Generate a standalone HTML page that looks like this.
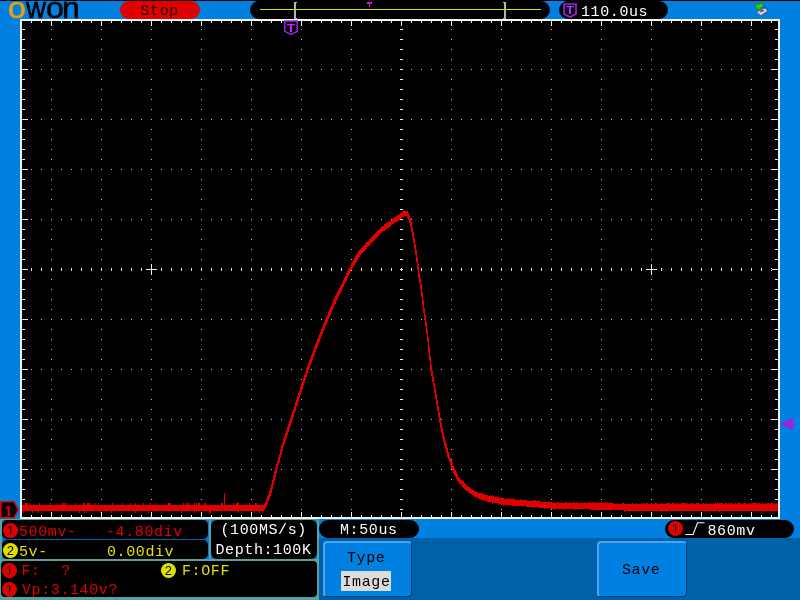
<!DOCTYPE html>
<html><head><meta charset="utf-8"><title>OWON</title>
<style>
html,body{margin:0;padding:0;}
body{width:800px;height:600px;overflow:hidden;background:#0080e0;position:relative;font-family:"Liberation Mono",monospace;font-size:15px;letter-spacing:0.6px;line-height:18px;}
.a{position:absolute;}
.t{position:absolute;white-space:pre;height:18px;line-height:18px;}
.pill{position:absolute;background:#000;border-radius:9px;}
.bk{position:absolute;background:#000;}
.c{position:absolute;border-radius:50%;width:15.5px;height:15.5px;color:#000;font-family:"Liberation Sans",sans-serif;font-size:13px;line-height:15.5px;text-align:center;letter-spacing:0;}
.lg{position:absolute;top:-10px;font-family:"Liberation Sans",sans-serif;font-size:29px;line-height:36px;color:#000;transform-origin:0 0;-webkit-text-stroke:0.6px;}
.ls{display:inline-block;transform-origin:0 0;}
.c.one::before{content:"";position:absolute;left:4.5px;top:11.5px;width:3px;height:1px;background:inherit}
.c.one::after{content:"";position:absolute;left:8.5px;top:11.5px;width:2.5px;height:1px;background:inherit}
.red{color:#e00000;} .yel{color:#e0e000;} .wh{color:#fff;}
.btn{position:absolute;background:#0080e0;border-radius:4px;box-sizing:border-box;border-top:2px solid #4ca4ee;border-left:2px solid #4ca4ee;border-right:1.5px solid #003c74;border-bottom:1.5px solid #003c74;}
</style></head><body><div id="w" style="position:absolute;left:0;top:0;width:800px;height:600px;overflow:hidden;will-change:transform">
<div class="a" style="left:0;top:0;width:800px;height:1px;background:#000"></div>

<!-- logo -->
<div class="lg" style="left:0;white-space:nowrap;letter-spacing:0"><span class="ls" style="margin-left:7.9px;transform:scaleX(1.107);color:#e8a010">o</span><span class="ls" style="margin-left:2.37px;transform:scaleX(0.95)">w</span><span class="ls" style="margin-left:-1.24px;transform:scaleX(1.11)">o</span><span class="ls" style="margin-left:-0.03px;transform:scaleX(1.1)">n</span></div>

<!-- Stop -->
<div class="a" style="left:120px;top:1px;width:80px;height:18px;border-radius:9px;background:#e00000"></div>
<div class="t" style="left:140.5px;top:3px;color:#1a0000">Stop</div>

<!-- position bar -->
<div class="pill" style="left:250px;top:1px;width:300px;height:18px"></div>
<div class="a" style="left:260px;top:9px;width:281px;height:1px;background:#e0e000"></div>
<div class="a" style="left:294px;top:2px;width:2px;height:17px;background:#b4b4b4"></div>
<div class="a" style="left:296px;top:2px;width:1px;height:1px;background:#b4b4b4"></div>
<div class="a" style="left:296px;top:18px;width:1px;height:1px;background:#b4b4b4"></div>
<div class="a" style="left:504px;top:2px;width:2px;height:17px;background:#b4b4b4"></div>
<div class="a" style="left:503px;top:2px;width:1px;height:1px;background:#b4b4b4"></div>
<div class="a" style="left:503px;top:18px;width:1px;height:1px;background:#b4b4b4"></div>
<div class="a" style="left:367px;top:2px;width:5px;height:2px;background:#f000f0"></div>
<div class="a" style="left:369px;top:4px;width:1px;height:3px;background:#f000f0"></div>

<!-- time pill -->
<div class="pill" style="left:559px;top:1px;width:109px;height:18px"></div>
<svg class="a" style="left:563px;top:3px" width="14" height="15" viewBox="0 0 14 15"><path d="M1 1H13V11L7 14L1 11Z" fill="#000" stroke="#a020f0" stroke-width="1.6"/></svg>
<div class="a" style="left:563px;top:4px;width:14px;height:12px;color:#c828ff;font-family:'Liberation Sans',sans-serif;font-weight:bold;font-size:11px;line-height:12px;text-align:center;letter-spacing:0;transform:scaleX(1.2)">T</div>
<div class="t wh" style="left:581px;top:4px">110.0us</div>

<!-- usb icon -->
<svg class="a" style="left:752px;top:0px" width="20" height="20" viewBox="0 0 20 20">
<path d="M12 5L15.5 8.5L16.6 11.8L10 16.6L8.5 15Z" fill="#0058c8" opacity="0.7"/>
<path d="M6 11.2L13.2 8L15.7 11.2L8.8 16L5.7 13.4Z" fill="#d0d0e0" stroke="#707090" stroke-width="0.7"/>
<path d="M6.2 13.6L8.9 15.7L15.3 11.4" fill="none" stroke="#505070" stroke-width="0.9"/>
<path d="M8.4 11.6L11.6 10.1" stroke="#383868" stroke-width="1.6"/>
<path d="M4.2 2.4L6 4.6L8.6 3L10.6 3.2L11.3 5L10.8 6.8L8.4 8L8.2 10.9L5.6 9.6L3.4 7.4L3.6 4.8Z" fill="#2cb414" stroke="#1c8c10" stroke-width="0.7" stroke-linejoin="round"/>
<path d="M4.8 5.2L7 6.2L9.2 4.4L9.8 5.6L7.4 7.2L5.2 6.8Z" fill="#6cd828"/>
</svg>

<!-- plot -->
<div class="a" style="left:20px;top:19px;width:760px;height:500px;background:#f8f4f0"></div>
<div class="a" style="left:22px;top:21px;width:756px;height:496px;background:#000"></div>
<svg class="a" style="left:0;top:0" width="800" height="600" viewBox="0 0 800 600" shape-rendering="crispEdges">
<g stroke="#c4c4c4" stroke-width="1" fill="none"><line x1="51.5" y1="29" x2="51.5" y2="512" stroke-dasharray="1 9"/><line x1="101.5" y1="29" x2="101.5" y2="512" stroke-dasharray="1 9"/><line x1="151.5" y1="29" x2="151.5" y2="512" stroke-dasharray="1 9"/><line x1="201.5" y1="29" x2="201.5" y2="512" stroke-dasharray="1 9"/><line x1="251.5" y1="29" x2="251.5" y2="512" stroke-dasharray="1 9"/><line x1="301.5" y1="29" x2="301.5" y2="512" stroke-dasharray="1 9"/><line x1="351.5" y1="29" x2="351.5" y2="512" stroke-dasharray="1 9"/><line x1="451.5" y1="29" x2="451.5" y2="512" stroke-dasharray="1 9"/><line x1="501.5" y1="29" x2="501.5" y2="512" stroke-dasharray="1 9"/><line x1="551.5" y1="29" x2="551.5" y2="512" stroke-dasharray="1 9"/><line x1="601.5" y1="29" x2="601.5" y2="512" stroke-dasharray="1 9"/><line x1="651.5" y1="29" x2="651.5" y2="512" stroke-dasharray="1 9"/><line x1="701.5" y1="29" x2="701.5" y2="512" stroke-dasharray="1 9"/><line x1="751.5" y1="29" x2="751.5" y2="512" stroke-dasharray="1 9"/><line x1="31" y1="69.5" x2="774" y2="69.5" stroke-dasharray="1 9"/><line x1="31" y1="119.5" x2="774" y2="119.5" stroke-dasharray="1 9"/><line x1="31" y1="169.5" x2="774" y2="169.5" stroke-dasharray="1 9"/><line x1="31" y1="219.5" x2="774" y2="219.5" stroke-dasharray="1 9"/><line x1="31" y1="319.5" x2="774" y2="319.5" stroke-dasharray="1 9"/><line x1="31" y1="369.5" x2="774" y2="369.5" stroke-dasharray="1 9"/><line x1="31" y1="419.5" x2="774" y2="419.5" stroke-dasharray="1 9"/><line x1="31" y1="469.5" x2="774" y2="469.5" stroke-dasharray="1 9"/></g>
<path d="M31 21v2h1v-2zM31 515v2h1v-2zM41 21v2h1v-2zM41 515v2h1v-2zM51 21v5h1v-5zM51 512v5h1v-5zM61 21v2h1v-2zM61 515v2h1v-2zM71 21v2h1v-2zM71 515v2h1v-2zM81 21v2h1v-2zM81 515v2h1v-2zM91 21v2h1v-2zM91 515v2h1v-2zM101 21v5h1v-5zM101 512v5h1v-5zM111 21v2h1v-2zM111 515v2h1v-2zM121 21v2h1v-2zM121 515v2h1v-2zM131 21v2h1v-2zM131 515v2h1v-2zM141 21v2h1v-2zM141 515v2h1v-2zM151 21v5h1v-5zM151 512v5h1v-5zM161 21v2h1v-2zM161 515v2h1v-2zM171 21v2h1v-2zM171 515v2h1v-2zM181 21v2h1v-2zM181 515v2h1v-2zM191 21v2h1v-2zM191 515v2h1v-2zM201 21v5h1v-5zM201 512v5h1v-5zM211 21v2h1v-2zM211 515v2h1v-2zM221 21v2h1v-2zM221 515v2h1v-2zM231 21v2h1v-2zM231 515v2h1v-2zM241 21v2h1v-2zM241 515v2h1v-2zM251 21v5h1v-5zM251 512v5h1v-5zM261 21v2h1v-2zM261 515v2h1v-2zM271 21v2h1v-2zM271 515v2h1v-2zM281 21v2h1v-2zM281 515v2h1v-2zM291 21v2h1v-2zM291 515v2h1v-2zM301 21v5h1v-5zM301 512v5h1v-5zM311 21v2h1v-2zM311 515v2h1v-2zM321 21v2h1v-2zM321 515v2h1v-2zM331 21v2h1v-2zM331 515v2h1v-2zM341 21v2h1v-2zM341 515v2h1v-2zM351 21v5h1v-5zM351 512v5h1v-5zM361 21v2h1v-2zM361 515v2h1v-2zM371 21v2h1v-2zM371 515v2h1v-2zM381 21v2h1v-2zM381 515v2h1v-2zM391 21v2h1v-2zM391 515v2h1v-2zM401 21v5h1v-5zM401 512v5h1v-5zM411 21v2h1v-2zM411 515v2h1v-2zM421 21v2h1v-2zM421 515v2h1v-2zM431 21v2h1v-2zM431 515v2h1v-2zM441 21v2h1v-2zM441 515v2h1v-2zM451 21v5h1v-5zM451 512v5h1v-5zM461 21v2h1v-2zM461 515v2h1v-2zM471 21v2h1v-2zM471 515v2h1v-2zM481 21v2h1v-2zM481 515v2h1v-2zM491 21v2h1v-2zM491 515v2h1v-2zM501 21v5h1v-5zM501 512v5h1v-5zM511 21v2h1v-2zM511 515v2h1v-2zM521 21v2h1v-2zM521 515v2h1v-2zM531 21v2h1v-2zM531 515v2h1v-2zM541 21v2h1v-2zM541 515v2h1v-2zM551 21v5h1v-5zM551 512v5h1v-5zM561 21v2h1v-2zM561 515v2h1v-2zM571 21v2h1v-2zM571 515v2h1v-2zM581 21v2h1v-2zM581 515v2h1v-2zM591 21v2h1v-2zM591 515v2h1v-2zM601 21v5h1v-5zM601 512v5h1v-5zM611 21v2h1v-2zM611 515v2h1v-2zM621 21v2h1v-2zM621 515v2h1v-2zM631 21v2h1v-2zM631 515v2h1v-2zM641 21v2h1v-2zM641 515v2h1v-2zM651 21v5h1v-5zM651 512v5h1v-5zM661 21v2h1v-2zM661 515v2h1v-2zM671 21v2h1v-2zM671 515v2h1v-2zM681 21v2h1v-2zM681 515v2h1v-2zM691 21v2h1v-2zM691 515v2h1v-2zM701 21v5h1v-5zM701 512v5h1v-5zM711 21v2h1v-2zM711 515v2h1v-2zM721 21v2h1v-2zM721 515v2h1v-2zM731 21v2h1v-2zM731 515v2h1v-2zM741 21v2h1v-2zM741 515v2h1v-2zM751 21v5h1v-5zM751 512v5h1v-5zM761 21v2h1v-2zM761 515v2h1v-2zM771 21v2h1v-2zM771 515v2h1v-2zM22 29h3v1h-3zM775 29h3v1h-3zM22 39h3v1h-3zM775 39h3v1h-3zM22 49h3v1h-3zM775 49h3v1h-3zM22 59h3v1h-3zM775 59h3v1h-3zM22 69h6v1h-6zM771 69h7v1h-7zM22 79h3v1h-3zM775 79h3v1h-3zM22 89h3v1h-3zM775 89h3v1h-3zM22 99h3v1h-3zM775 99h3v1h-3zM22 109h3v1h-3zM775 109h3v1h-3zM22 119h6v1h-6zM771 119h7v1h-7zM22 129h3v1h-3zM775 129h3v1h-3zM22 139h3v1h-3zM775 139h3v1h-3zM22 149h3v1h-3zM775 149h3v1h-3zM22 159h3v1h-3zM775 159h3v1h-3zM22 169h6v1h-6zM771 169h7v1h-7zM22 179h3v1h-3zM775 179h3v1h-3zM22 189h3v1h-3zM775 189h3v1h-3zM22 199h3v1h-3zM775 199h3v1h-3zM22 209h3v1h-3zM775 209h3v1h-3zM22 219h6v1h-6zM771 219h7v1h-7zM22 229h3v1h-3zM775 229h3v1h-3zM22 239h3v1h-3zM775 239h3v1h-3zM22 249h3v1h-3zM775 249h3v1h-3zM22 259h3v1h-3zM775 259h3v1h-3zM22 269h6v1h-6zM771 269h7v1h-7zM22 279h3v1h-3zM775 279h3v1h-3zM22 289h3v1h-3zM775 289h3v1h-3zM22 299h3v1h-3zM775 299h3v1h-3zM22 309h3v1h-3zM775 309h3v1h-3zM22 319h6v1h-6zM771 319h7v1h-7zM22 329h3v1h-3zM775 329h3v1h-3zM22 339h3v1h-3zM775 339h3v1h-3zM22 349h3v1h-3zM775 349h3v1h-3zM22 359h3v1h-3zM775 359h3v1h-3zM22 369h6v1h-6zM771 369h7v1h-7zM22 379h3v1h-3zM775 379h3v1h-3zM22 389h3v1h-3zM775 389h3v1h-3zM22 399h3v1h-3zM775 399h3v1h-3zM22 409h3v1h-3zM775 409h3v1h-3zM22 419h6v1h-6zM771 419h7v1h-7zM22 429h3v1h-3zM775 429h3v1h-3zM22 439h3v1h-3zM775 439h3v1h-3zM22 449h3v1h-3zM775 449h3v1h-3zM22 459h3v1h-3zM775 459h3v1h-3zM22 469h6v1h-6zM771 469h7v1h-7zM22 479h3v1h-3zM775 479h3v1h-3zM22 489h3v1h-3zM775 489h3v1h-3zM22 499h3v1h-3zM775 499h3v1h-3zM22 509h3v1h-3zM775 509h3v1h-3zM31 268v3h1v-3zM41 268v3h1v-3zM51 268v3h1v-3zM61 268v3h1v-3zM71 268v3h1v-3zM81 268v3h1v-3zM91 268v3h1v-3zM101 268v3h1v-3zM111 268v3h1v-3zM121 268v3h1v-3zM131 268v3h1v-3zM141 268v3h1v-3zM161 268v3h1v-3zM171 268v3h1v-3zM181 268v3h1v-3zM191 268v3h1v-3zM201 268v3h1v-3zM211 268v3h1v-3zM221 268v3h1v-3zM231 268v3h1v-3zM241 268v3h1v-3zM251 268v3h1v-3zM261 268v3h1v-3zM271 268v3h1v-3zM281 268v3h1v-3zM291 268v3h1v-3zM301 268v3h1v-3zM311 268v3h1v-3zM321 268v3h1v-3zM331 268v3h1v-3zM341 268v3h1v-3zM351 268v3h1v-3zM361 268v3h1v-3zM371 268v3h1v-3zM381 268v3h1v-3zM391 268v3h1v-3zM411 268v3h1v-3zM421 268v3h1v-3zM431 268v3h1v-3zM441 268v3h1v-3zM451 268v3h1v-3zM461 268v3h1v-3zM471 268v3h1v-3zM481 268v3h1v-3zM491 268v3h1v-3zM501 268v3h1v-3zM511 268v3h1v-3zM521 268v3h1v-3zM531 268v3h1v-3zM541 268v3h1v-3zM551 268v3h1v-3zM561 268v3h1v-3zM571 268v3h1v-3zM581 268v3h1v-3zM591 268v3h1v-3zM601 268v3h1v-3zM611 268v3h1v-3zM621 268v3h1v-3zM631 268v3h1v-3zM641 268v3h1v-3zM661 268v3h1v-3zM671 268v3h1v-3zM681 268v3h1v-3zM691 268v3h1v-3zM701 268v3h1v-3zM711 268v3h1v-3zM721 268v3h1v-3zM731 268v3h1v-3zM741 268v3h1v-3zM751 268v3h1v-3zM761 268v3h1v-3zM771 268v3h1v-3zM400 29h3v1h-3zM400 39h3v1h-3zM400 49h3v1h-3zM400 59h3v1h-3zM400 69h3v1h-3zM400 79h3v1h-3zM400 89h3v1h-3zM400 99h3v1h-3zM400 109h3v1h-3zM400 119h3v1h-3zM400 129h3v1h-3zM400 139h3v1h-3zM400 149h3v1h-3zM400 159h3v1h-3zM400 169h3v1h-3zM400 179h3v1h-3zM400 189h3v1h-3zM400 199h3v1h-3zM400 209h3v1h-3zM400 219h3v1h-3zM400 229h3v1h-3zM400 239h3v1h-3zM400 249h3v1h-3zM400 259h3v1h-3zM400 279h3v1h-3zM400 289h3v1h-3zM400 299h3v1h-3zM400 309h3v1h-3zM400 319h3v1h-3zM400 329h3v1h-3zM400 339h3v1h-3zM400 349h3v1h-3zM400 359h3v1h-3zM400 369h3v1h-3zM400 379h3v1h-3zM400 389h3v1h-3zM400 399h3v1h-3zM400 409h3v1h-3zM400 419h3v1h-3zM400 429h3v1h-3zM400 439h3v1h-3zM400 449h3v1h-3zM400 459h3v1h-3zM400 469h3v1h-3zM400 479h3v1h-3zM400 489h3v1h-3zM400 499h3v1h-3zM400 509h3v1h-3zM400 269h3v1h-3zM401 268h1v3h-1zM146 269h11v1h-11zM151 264h1v11h-1zM646 269h11v1h-11zM651 264h1v11h-1z" fill="#f0f0f0"/>
<path d="M22 505v6h1v-6zM23 505v8h1v-8zM24 505v6h1v-6zM25 503v8h1v-8zM26 503v8h1v-8zM27 503v8h1v-8zM28 505v6h1v-6zM29 503v8h1v-8zM30 505v6h1v-6zM31 505v6h1v-6zM32 505v8h1v-8zM33 505v6h1v-6zM34 505v6h1v-6zM35 505v6h1v-6zM36 505v6h1v-6zM37 505v6h1v-6zM38 505v8h1v-8zM39 503v8h1v-8zM40 505v6h1v-6zM41 505v6h1v-6zM42 505v6h1v-6zM43 505v6h1v-6zM44 505v6h1v-6zM45 505v6h1v-6zM46 505v6h1v-6zM47 505v6h1v-6zM48 505v6h1v-6zM49 505v6h1v-6zM50 503v8h1v-8zM51 505v6h1v-6zM52 505v6h1v-6zM53 505v6h1v-6zM54 505v6h1v-6zM55 505v6h1v-6zM56 505v6h1v-6zM57 503v8h1v-8zM58 505v6h1v-6zM59 505v6h1v-6zM60 505v6h1v-6zM61 503v8h1v-8zM62 505v6h1v-6zM63 503v8h1v-8zM64 503v8h1v-8zM65 505v6h1v-6zM66 503v8h1v-8zM67 505v6h1v-6zM68 505v6h1v-6zM69 505v6h1v-6zM70 505v6h1v-6zM71 505v6h1v-6zM72 505v6h1v-6zM73 505v6h1v-6zM74 505v6h1v-6zM75 503v8h1v-8zM76 505v6h1v-6zM77 505v6h1v-6zM78 505v6h1v-6zM79 505v8h1v-8zM80 505v6h1v-6zM81 505v6h1v-6zM82 505v6h1v-6zM83 503v8h1v-8zM84 503v10h1v-10zM85 505v6h1v-6zM86 505v8h1v-8zM87 503v8h1v-8zM88 503v8h1v-8zM89 503v8h1v-8zM90 505v6h1v-6zM91 505v6h1v-6zM92 505v6h1v-6zM93 505v6h1v-6zM94 505v6h1v-6zM95 503v8h1v-8zM96 505v6h1v-6zM97 505v6h1v-6zM98 503v8h1v-8zM99 505v6h1v-6zM100 505v8h1v-8zM101 505v6h1v-6zM102 505v6h1v-6zM103 505v6h1v-6zM104 505v6h1v-6zM105 505v6h1v-6zM106 505v6h1v-6zM107 505v6h1v-6zM108 505v6h1v-6zM109 505v6h1v-6zM110 505v6h1v-6zM111 505v8h1v-8zM112 503v8h1v-8zM113 505v6h1v-6zM114 505v6h1v-6zM115 505v6h1v-6zM116 505v6h1v-6zM117 505v6h1v-6zM118 505v6h1v-6zM119 505v6h1v-6zM120 505v6h1v-6zM121 505v6h1v-6zM122 503v8h1v-8zM123 505v6h1v-6zM124 505v6h1v-6zM125 505v6h1v-6zM126 505v6h1v-6zM127 505v6h1v-6zM128 505v6h1v-6zM129 505v6h1v-6zM130 503v8h1v-8zM131 505v6h1v-6zM132 505v6h1v-6zM133 505v6h1v-6zM134 505v6h1v-6zM135 503v10h1v-10zM136 505v6h1v-6zM137 505v6h1v-6zM138 505v6h1v-6zM139 505v6h1v-6zM140 505v6h1v-6zM141 505v6h1v-6zM142 505v6h1v-6zM143 503v8h1v-8zM144 505v6h1v-6zM145 505v6h1v-6zM146 505v6h1v-6zM147 505v6h1v-6zM148 505v8h1v-8zM149 505v6h1v-6zM150 503v8h1v-8zM151 505v6h1v-6zM152 505v6h1v-6zM153 505v6h1v-6zM154 505v6h1v-6zM155 503v8h1v-8zM156 505v6h1v-6zM157 505v6h1v-6zM158 505v6h1v-6zM159 505v6h1v-6zM160 505v6h1v-6zM161 505v6h1v-6zM162 505v6h1v-6zM163 505v6h1v-6zM164 505v6h1v-6zM165 505v6h1v-6zM166 505v6h1v-6zM167 505v6h1v-6zM168 503v8h1v-8zM169 503v8h1v-8zM170 503v8h1v-8zM171 505v6h1v-6zM172 505v6h1v-6zM173 505v6h1v-6zM174 505v6h1v-6zM175 505v6h1v-6zM176 505v6h1v-6zM177 505v6h1v-6zM178 505v6h1v-6zM179 505v6h1v-6zM180 505v6h1v-6zM181 505v8h1v-8zM182 505v6h1v-6zM183 503v8h1v-8zM184 505v6h1v-6zM185 503v8h1v-8zM186 505v6h1v-6zM187 503v8h1v-8zM188 503v8h1v-8zM189 505v6h1v-6zM190 505v6h1v-6zM191 505v6h1v-6zM192 505v6h1v-6zM193 505v6h1v-6zM194 503v10h1v-10zM195 505v6h1v-6zM196 503v8h1v-8zM197 505v6h1v-6zM198 503v8h1v-8zM199 503v8h1v-8zM200 505v6h1v-6zM201 505v6h1v-6zM202 505v6h1v-6zM203 505v6h1v-6zM204 503v8h1v-8zM205 503v8h1v-8zM206 505v6h1v-6zM207 505v6h1v-6zM208 505v6h1v-6zM209 505v8h1v-8zM210 505v8h1v-8zM211 505v6h1v-6zM212 505v6h1v-6zM213 505v6h1v-6zM214 505v6h1v-6zM215 505v6h1v-6zM216 505v6h1v-6zM217 505v6h1v-6zM218 505v6h1v-6zM219 505v6h1v-6zM220 505v6h1v-6zM221 503v8h1v-8zM222 503v8h1v-8zM223 505v6h1v-6zM224 493v18h1v-18zM225 505v6h1v-6zM226 505v6h1v-6zM227 505v6h1v-6zM228 505v6h1v-6zM229 505v6h1v-6zM230 505v6h1v-6zM231 505v6h1v-6zM232 505v6h1v-6zM233 503v8h1v-8zM234 505v6h1v-6zM235 505v6h1v-6zM236 503v8h1v-8zM237 503v8h1v-8zM238 503v10h1v-10zM239 505v6h1v-6zM240 505v6h1v-6zM241 505v6h1v-6zM242 505v6h1v-6zM243 505v6h1v-6zM244 505v6h1v-6zM245 505v6h1v-6zM246 503v8h1v-8zM247 505v6h1v-6zM248 505v6h1v-6zM249 503v8h1v-8zM250 505v6h1v-6zM251 505v6h1v-6zM252 505v6h1v-6zM253 505v6h1v-6zM254 505v8h1v-8zM255 503v8h1v-8zM256 503v8h1v-8zM257 505v6h1v-6zM258 505v6h1v-6zM259 505v8h1v-8zM260 505v6h1v-6zM261 505v6h1v-6zM262 505v8h1v-8zM263 505v6h1v-6zM264 504v6h1v-6zM265 502v6h1v-6zM266 499v8h1v-8zM267 496v8h1v-8zM268 494v7h1v-7zM269 491v8h1v-8zM270 488v8h1v-8zM271 484v9h1v-9zM272 480v9h1v-9zM273 476v9h1v-9zM274 471v10h1v-10zM275 468v9h1v-9zM276 464v9h1v-9zM277 461v8h1v-8zM278 457v8h1v-8zM279 454v8h1v-8zM280 450v8h1v-8zM281 446v9h1v-9zM282 443v8h1v-8zM283 439v8h1v-8zM284 437v7h1v-7zM285 433v8h1v-8zM286 430v8h1v-8zM287 427v8h1v-8zM288 424v8h1v-8zM289 421v8h1v-8zM290 418v8h1v-8zM291 415v8h1v-8zM292 412v8h1v-8zM293 409v8h1v-8zM294 406v7h1v-7zM295 402v9h1v-9zM296 400v7h1v-7zM297 396v9h1v-9zM298 393v9h1v-9zM299 391v7h1v-7zM300 387v8h1v-8zM301 384v8h1v-8zM302 381v8h1v-8zM303 378v8h1v-8zM304 375v8h1v-8zM305 372v8h1v-8zM306 368v9h1v-9zM307 366v7h1v-7zM308 363v7h1v-7zM309 360v8h1v-8zM310 358v7h1v-7zM311 355v8h1v-8zM312 353v7h1v-7zM313 350v7h1v-7zM314 347v8h1v-8zM315 344v8h1v-8zM316 342v7h1v-7zM317 339v8h1v-8zM318 337v7h1v-7zM319 334v8h1v-8zM320 332v7h1v-7zM321 329v7h1v-7zM322 327v7h1v-7zM323 324v7h1v-7zM324 322v7h1v-7zM325 319v7h1v-7zM326 317v7h1v-7zM327 315v7h1v-7zM328 312v7h1v-7zM329 310v7h1v-7zM330 307v8h1v-8zM331 305v7h1v-7zM332 303v7h1v-7zM333 300v8h1v-8zM334 298v7h1v-7zM335 296v8h1v-8zM336 294v7h1v-7zM337 292v7h1v-7zM338 290v7h1v-7zM339 288v7h1v-7zM340 286v7h1v-7zM341 284v7h1v-7zM342 282v7h1v-7zM343 280v7h1v-7zM344 278v6h1v-6zM345 276v6h1v-6zM346 273v8h1v-8zM347 271v7h1v-7zM348 269v7h1v-7zM349 268v6h1v-6zM350 266v6h1v-6zM351 263v7h1v-7zM352 262v6h1v-6zM353 260v6h1v-6zM354 258v7h1v-7zM355 256v7h1v-7zM356 255v7h1v-7zM357 253v7h1v-7zM358 251v7h1v-7zM359 250v7h1v-7zM360 249v6h1v-6zM361 248v6h1v-6zM362 247v6h1v-6zM363 246v6h1v-6zM364 245v6h1v-6zM365 243v7h1v-7zM366 242v7h1v-7zM367 242v5h1v-5zM368 241v5h1v-5zM369 239v7h1v-7zM370 239v5h1v-5zM371 237v6h1v-6zM372 236v6h1v-6zM373 235v6h1v-6zM374 234v6h1v-6zM375 233v6h1v-6zM376 232v6h1v-6zM377 231v6h1v-6zM378 230v6h1v-6zM379 229v6h1v-6zM380 228v5h1v-5zM381 227v6h1v-6zM382 226v6h1v-6zM383 226v5h1v-5zM384 224v7h1v-7zM385 224v6h1v-6zM386 223v6h1v-6zM387 222v6h1v-6zM388 222v6h1v-6zM389 221v6h1v-6zM390 221v5h1v-5zM391 220v5h1v-5zM392 219v5h1v-5zM393 218v6h1v-6zM394 218v5h1v-5zM395 217v5h1v-5zM396 216v6h1v-6zM397 215v6h1v-6zM398 215v6h1v-6zM399 214v6h1v-6zM400 213v6h1v-6zM401 213v5h1v-5zM402 212v5h1v-5zM403 211v6h1v-6zM404 211v5h1v-5zM405 211v5h1v-5zM406 211v5h1v-5zM407 211v7h1v-7zM408 213v7h1v-7zM409 215v8h1v-8zM410 218v9h1v-9zM411 222v10h1v-10zM412 227v10h1v-10zM413 232v11h1v-11zM414 238v11h1v-11zM415 244v11h1v-11zM416 250v12h1v-12zM417 257v13h1v-13zM418 264v14h1v-14zM419 273v10h1v-10zM420 278v11h1v-11zM421 284v13h1v-13zM422 292v13h1v-13zM423 300v13h1v-13zM424 308v12h1v-12zM425 315v12h1v-12zM426 322v12h1v-12zM427 329v13h1v-13zM428 337v15h1v-15zM429 347v14h1v-14zM430 356v15h1v-15zM431 365v11h1v-11zM432 371v11h1v-11zM433 377v10h1v-10zM434 383v10h1v-10zM435 388v11h1v-11zM436 394v11h1v-11zM437 400v11h1v-11zM438 406v11h1v-11zM439 412v11h1v-11zM440 417v11h1v-11zM441 423v10h1v-10zM442 428v10h1v-10zM443 433v9h1v-9zM444 437v9h1v-9zM445 441v8h1v-8zM446 444v9h1v-9zM447 448v9h1v-9zM448 452v7h1v-7zM449 455v7h1v-7zM450 458v7h1v-7zM451 460v9h1v-9zM452 463v8h1v-8zM453 466v7h1v-7zM454 468v7h1v-7zM455 470v7h1v-7zM456 472v7h1v-7zM457 474v7h1v-7zM458 477v5h1v-5zM459 478v6h1v-6zM460 479v5h1v-5zM461 480v5h1v-5zM462 481v6h1v-6zM463 481v7h1v-7zM464 483v6h1v-6zM465 484v6h1v-6zM466 485v6h1v-6zM467 486v5h1v-5zM468 487v5h1v-5zM469 487v6h1v-6zM470 488v6h1v-6zM471 489v5h1v-5zM472 490v5h1v-5zM473 490v6h1v-6zM474 491v6h1v-6zM475 491v6h1v-6zM476 492v5h1v-5zM477 492v6h1v-6zM478 493v5h1v-5zM479 493v6h1v-6zM480 493v6h1v-6zM481 493v7h1v-7zM482 494v6h1v-6zM483 494v6h1v-6zM484 494v7h1v-7zM485 495v6h1v-6zM486 495v6h1v-6zM487 495v7h1v-7zM488 496v6h1v-6zM489 496v6h1v-6zM490 495v7h1v-7zM491 496v6h1v-6zM492 495v9h1v-9zM493 496v7h1v-7zM494 497v6h1v-6zM495 497v6h1v-6zM496 497v6h1v-6zM497 496v7h1v-7zM498 497v8h1v-8zM499 498v6h1v-6zM500 498v6h1v-6zM501 497v8h1v-8zM502 498v6h1v-6zM503 498v8h1v-8zM504 499v6h1v-6zM505 499v6h1v-6zM506 499v6h1v-6zM507 498v7h1v-7zM508 499v6h1v-6zM509 498v7h1v-7zM510 499v7h1v-7zM511 499v6h1v-6zM512 499v7h1v-7zM513 498v8h1v-8zM514 499v7h1v-7zM515 500v6h1v-6zM516 500v6h1v-6zM517 500v6h1v-6zM518 500v6h1v-6zM519 500v6h1v-6zM520 499v7h1v-7zM521 500v6h1v-6zM522 500v7h1v-7zM523 500v6h1v-6zM524 500v6h1v-6zM525 500v6h1v-6zM526 500v7h1v-7zM527 501v6h1v-6zM528 501v6h1v-6zM529 501v6h1v-6zM530 501v6h1v-6zM531 501v6h1v-6zM532 501v7h1v-7zM533 500v7h1v-7zM534 501v7h1v-7zM535 500v7h1v-7zM536 501v6h1v-6zM537 501v6h1v-6zM538 501v7h1v-7zM539 500v8h1v-8zM540 502v6h1v-6zM541 502v6h1v-6zM542 502v6h1v-6zM543 502v6h1v-6zM544 502v7h1v-7zM545 502v6h1v-6zM546 502v6h1v-6zM547 502v6h1v-6zM548 502v6h1v-6zM549 501v7h1v-7zM550 502v6h1v-6zM551 502v7h1v-7zM552 503v6h1v-6zM553 503v6h1v-6zM554 503v7h1v-7zM555 503v6h1v-6zM556 503v6h1v-6zM557 502v7h1v-7zM558 502v7h1v-7zM559 503v6h1v-6zM560 503v6h1v-6zM561 503v6h1v-6zM562 503v6h1v-6zM563 503v7h1v-7zM564 503v6h1v-6zM565 502v7h1v-7zM566 502v7h1v-7zM567 503v6h1v-6zM568 503v6h1v-6zM569 502v7h1v-7zM570 503v6h1v-6zM571 503v6h1v-6zM572 503v6h1v-6zM573 502v8h1v-8zM574 503v6h1v-6zM575 503v7h1v-7zM576 502v7h1v-7zM577 503v6h1v-6zM578 503v6h1v-6zM579 503v6h1v-6zM580 503v6h1v-6zM581 503v6h1v-6zM582 503v6h1v-6zM583 503v6h1v-6zM584 502v7h1v-7zM585 503v6h1v-6zM586 503v6h1v-6zM587 503v6h1v-6zM588 502v7h1v-7zM589 503v6h1v-6zM590 502v8h1v-8zM591 503v7h1v-7zM592 502v8h1v-8zM593 503v7h1v-7zM594 502v8h1v-8zM595 503v7h1v-7zM596 502v8h1v-8zM597 503v7h1v-7zM598 503v8h1v-8zM599 503v7h1v-7zM600 503v7h1v-7zM601 503v7h1v-7zM602 503v7h1v-7zM603 503v7h1v-7zM604 503v7h1v-7zM605 502v8h1v-8zM606 503v7h1v-7zM607 502v8h1v-8zM608 503v7h1v-7zM609 502v8h1v-8zM610 503v8h1v-8zM611 503v7h1v-7zM612 503v7h1v-7zM613 503v7h1v-7zM614 504v6h1v-6zM615 504v6h1v-6zM616 504v6h1v-6zM617 503v7h1v-7zM618 504v6h1v-6zM619 504v6h1v-6zM620 504v6h1v-6zM621 504v6h1v-6zM622 503v7h1v-7zM623 503v7h1v-7zM624 504v8h1v-8zM625 504v7h1v-7zM626 504v7h1v-7zM627 504v7h1v-7zM628 504v7h1v-7zM629 504v7h1v-7zM630 504v7h1v-7zM631 504v7h1v-7zM632 503v8h1v-8zM633 504v7h1v-7zM634 504v7h1v-7zM635 504v7h1v-7zM636 503v8h1v-8zM637 504v7h1v-7zM638 504v7h1v-7zM639 504v7h1v-7zM640 504v7h1v-7zM641 503v8h1v-8zM642 504v7h1v-7zM643 503v8h1v-8zM644 503v8h1v-8zM645 504v7h1v-7zM646 503v8h1v-8zM647 503v8h1v-8zM648 504v7h1v-7zM649 504v7h1v-7zM650 504v7h1v-7zM651 503v8h1v-8zM652 504v7h1v-7zM653 504v7h1v-7zM654 504v7h1v-7zM655 503v8h1v-8zM656 503v8h1v-8zM657 504v7h1v-7zM658 504v7h1v-7zM659 504v7h1v-7zM660 504v7h1v-7zM661 503v9h1v-9zM662 503v8h1v-8zM663 504v7h1v-7zM664 504v7h1v-7zM665 503v8h1v-8zM666 504v8h1v-8zM667 503v8h1v-8zM668 503v8h1v-8zM669 503v8h1v-8zM670 504v7h1v-7zM671 504v7h1v-7zM672 503v8h1v-8zM673 503v8h1v-8zM674 503v8h1v-8zM675 504v7h1v-7zM676 503v8h1v-8zM677 503v8h1v-8zM678 504v7h1v-7zM679 504v7h1v-7zM680 504v7h1v-7zM681 503v8h1v-8zM682 503v8h1v-8zM683 503v8h1v-8zM684 503v8h1v-8zM685 503v8h1v-8zM686 504v7h1v-7zM687 503v8h1v-8zM688 504v7h1v-7zM689 504v7h1v-7zM690 503v8h1v-8zM691 503v8h1v-8zM692 504v7h1v-7zM693 503v8h1v-8zM694 504v7h1v-7zM695 504v7h1v-7zM696 503v8h1v-8zM697 503v8h1v-8zM698 503v8h1v-8zM699 504v7h1v-7zM700 504v7h1v-7zM701 504v7h1v-7zM702 504v7h1v-7zM703 503v8h1v-8zM704 504v7h1v-7zM705 504v8h1v-8zM706 503v8h1v-8zM707 504v7h1v-7zM708 504v7h1v-7zM709 504v7h1v-7zM710 503v8h1v-8zM711 504v7h1v-7zM712 504v7h1v-7zM713 503v8h1v-8zM714 504v7h1v-7zM715 503v8h1v-8zM716 504v7h1v-7zM717 503v8h1v-8zM718 503v8h1v-8zM719 503v9h1v-9zM720 503v8h1v-8zM721 503v8h1v-8zM722 503v8h1v-8zM723 504v7h1v-7zM724 504v7h1v-7zM725 503v8h1v-8zM726 503v8h1v-8zM727 504v7h1v-7zM728 503v8h1v-8zM729 504v7h1v-7zM730 503v8h1v-8zM731 503v8h1v-8zM732 504v7h1v-7zM733 504v7h1v-7zM734 504v7h1v-7zM735 503v8h1v-8zM736 504v7h1v-7zM737 503v8h1v-8zM738 503v8h1v-8zM739 503v8h1v-8zM740 503v8h1v-8zM741 504v7h1v-7zM742 504v7h1v-7zM743 503v8h1v-8zM744 503v8h1v-8zM745 503v8h1v-8zM746 504v7h1v-7zM747 504v7h1v-7zM748 504v7h1v-7zM749 503v8h1v-8zM750 504v7h1v-7zM751 503v8h1v-8zM752 503v8h1v-8zM753 503v8h1v-8zM754 503v8h1v-8zM755 503v8h1v-8zM756 503v8h1v-8zM757 504v7h1v-7zM758 503v8h1v-8zM759 503v8h1v-8zM760 504v7h1v-7zM761 504v7h1v-7zM762 503v8h1v-8zM763 504v7h1v-7zM764 504v8h1v-8zM765 503v8h1v-8zM766 504v7h1v-7zM767 503v8h1v-8zM768 503v8h1v-8zM769 504v7h1v-7zM770 504v7h1v-7zM771 503v8h1v-8zM772 503v8h1v-8zM773 504v7h1v-7zM774 503v8h1v-8zM775 504v7h1v-7zM776 503v8h1v-8zM777 504v7h1v-7z" fill="#e00000"/>
</svg>

<!-- T marker in plot -->
<svg class="a" style="left:283px;top:20px" width="16" height="16" viewBox="0 0 16 16"><path d="M1.8 1H14.2V11.3L8 14.4L1.8 11.3Z" fill="#000" stroke="#a020f0" stroke-width="1.5"/></svg>
<div class="a" style="left:284px;top:22px;width:14px;height:12px;color:#c828ff;font-family:'Liberation Sans',sans-serif;font-weight:bold;font-size:11px;line-height:12px;text-align:center;letter-spacing:0;transform:scaleX(1.25)">T</div>

<!-- trigger level arrow -->
<svg class="a" style="left:780px;top:416px" width="15" height="15" viewBox="0 0 15 15"><path d="M0 7.7L13.5 1.5V14Z" fill="#a020e0"/></svg>

<!-- ch1 marker -->
<svg class="a" style="left:0;top:500px" width="20" height="20" viewBox="0 0 20 20"><path d="M0.8 1.8H14L18.3 9.8L14 17.8H0.8Z" fill="#000" stroke="#e00000" stroke-width="1.6"/></svg>
<div class="a red" style="left:1px;top:503px;width:15px;height:16px;font-family:'Liberation Sans',sans-serif;font-weight:bold;font-size:15px;line-height:16px;text-align:center;letter-spacing:0">1</div>
<div class="bk" style="left:3px;top:514px;width:4.7px;height:2px"></div><div class="bk" style="left:10px;top:514px;width:3.4px;height:2px"></div>

<!-- bottom-left info panel -->
<div class="a" style="left:0;top:519px;width:319px;height:81px;background:#5aa0a0"></div>
<div class="a" style="left:2px;top:520px;width:207px;height:39px;background:#0878d8"></div>
<div class="a" style="left:2px;top:539px;width:205px;height:1px;background:#0060b0"></div>
<div class="a" style="left:211px;top:520px;width:106px;height:39px;background:#0878d8"></div>
<div class="bk" style="left:2px;top:520px;width:206px;height:19px;border-radius:5px"></div>
<div class="bk" style="left:2px;top:540px;width:206px;height:19px;border-radius:5px"></div>
<div class="bk" style="left:211px;top:520px;width:106px;height:39px;border-radius:6px"></div>
<div class="bk" style="left:1px;top:561px;width:316px;height:36px;border-radius:4px"></div>

<div class="c one" style="left:2.5px;top:522.5px;background:#e00000">1</div>
<div class="t red" style="left:19px;top:524px">500mv-</div>
<div class="t red" style="left:106px;top:524px">-4.80div</div>
<div class="c" style="left:2.5px;top:542.5px;background:#e0e000">2</div>
<div class="t yel" style="left:19px;top:544px">5v-</div>
<div class="t yel" style="left:107px;top:544px">0.00div</div>
<div class="t wh" style="left:220.5px;top:522px">(100MS/s)</div>
<div class="t wh" style="left:215.5px;top:542px">Depth:100K</div>
<div class="c one" style="left:1.5px;top:562.5px;background:#e00000">1</div>
<div class="t red" style="left:21.5px;top:563px">F:</div><div class="t red" style="left:61.2px;top:563px">?</div>
<div class="c" style="left:160.5px;top:562.5px;background:#e0e000">2</div>
<div class="t yel" style="left:182px;top:563px">F:OFF</div>
<div class="c one" style="left:1.5px;top:581.5px;background:#e00000">1</div>
<div class="t red" style="left:22px;top:582px">Vp:3.140v?</div>

<!-- bottom-right -->
<div class="a" style="left:319px;top:538px;width:481px;height:62px;background:#0060a8"></div>
<div class="pill" style="left:319px;top:520px;width:99.5px;height:17.5px;border-radius:9px"></div>
<div class="t wh" style="left:340px;top:522px">M:50us</div>
<div class="pill" style="left:665px;top:520px;width:128.8px;height:17.5px;border-radius:9px"></div>
<div class="c one" style="left:667.5px;top:520.5px;background:#e00000">1</div>
<svg class="a" style="left:684px;top:520px" width="22" height="17" viewBox="0 0 22 17" shape-rendering="auto"><path d="M1.4 14.5H9L13.6 2.8H20.6" fill="none" stroke="#fff" stroke-width="1.1"/></svg>
<div class="t wh" style="left:707.5px;top:523px">860mv</div>

<div class="btn" style="left:323px;top:541px;width:89px;height:56px"></div>
<div class="t" style="left:347px;top:550px;color:#000">Type</div>
<div class="a" style="left:341px;top:571px;width:50px;height:20px;background:#dcdcdc"></div>
<div class="t" style="left:342.5px;top:574px;color:#000">Image</div>
<div class="btn" style="left:597px;top:541px;width:90px;height:56px"></div>
<div class="t" style="left:622px;top:562px;color:#000">Save</div>
</div></body></html>
